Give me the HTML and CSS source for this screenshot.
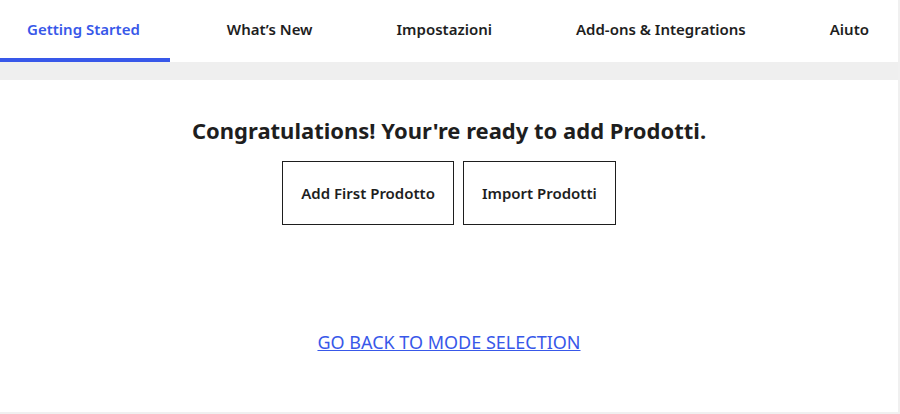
FILE: index.html
```html
<!DOCTYPE html>
<html lang="it">
<head>
<meta charset="utf-8">
<title>Getting Started</title>
<link rel="stylesheet" href="styles.css">
</head>
<body>
<div class="page">
  <nav class="tabs">
    <a class="tab active" href="#">Getting Started</a>
    <a class="tab" href="#">What’s New</a>
    <a class="tab" href="#">Impostazioni</a>
    <a class="tab" href="#">Add-ons &amp; Integrations</a>
    <a class="tab" href="#">Aiuto</a>
  </nav>
  <div class="band"></div>
  <main class="content">
    <h1 class="title">Congratulations! Your're ready to add Prodotti.</h1>
    <div class="actions">
      <a class="btn" href="#">Add First Prodotto</a>
      <a class="btn" href="#">Import Prodotti</a>
    </div>
    <a class="back" href="#">GO BACK TO MODE SELECTION</a>
  </main>
</div>
</body>
</html>
```
FILE: styles.css
```css
html, body {
  margin: 0;
  padding: 0;
  background: #f0f0f0;
}
body {
  font-family: "Noto Sans", "Open Sans", sans-serif;
  color: #1e1e1e;
}
.page {
  width: 898px;
  height: 412px;
  background: #fff;
  display: flex;
  flex-direction: column;
}
.tabs {
  display: flex;
  justify-content: space-between;
  height: 62px;
  padding-right: 2px;
}
.tab {
  display: flex;
  align-items: center;
  padding: 0 27px;
  font-size: 15px;
  font-weight: 600;
  color: #1e1e1e;
  text-decoration: none;
  border-bottom: 4px solid transparent;
  box-sizing: border-box;
  height: 62px;
}
.tab.active {
  color: #3858e9;
  border-bottom-color: #3858e9;
  padding-right: 30px;
}
.band {
  height: 18px;
  background: #efefef;
}
.content {
  display: flex;
  flex-direction: column;
  align-items: center;
}
.title {
  margin: 36px 0 0;
  font-size: 22px;
  font-weight: 700;
  line-height: 28px;
  color: #1e1e1e;
}
.actions {
  display: flex;
  gap: 9px;
  margin-top: 17px;
}
.btn {
  display: flex;
  align-items: center;
  height: 64px;
  box-sizing: border-box;
  padding: 0 18px;
  border: 1px solid #1e1e1e;
  font-size: 15px;
  font-weight: 600;
  color: #1e1e1e;
  text-decoration: none;
}
.back {
  margin-top: 105px;
  font-size: 18px;
  color: #3858e9;
  text-decoration: underline;
}
```
